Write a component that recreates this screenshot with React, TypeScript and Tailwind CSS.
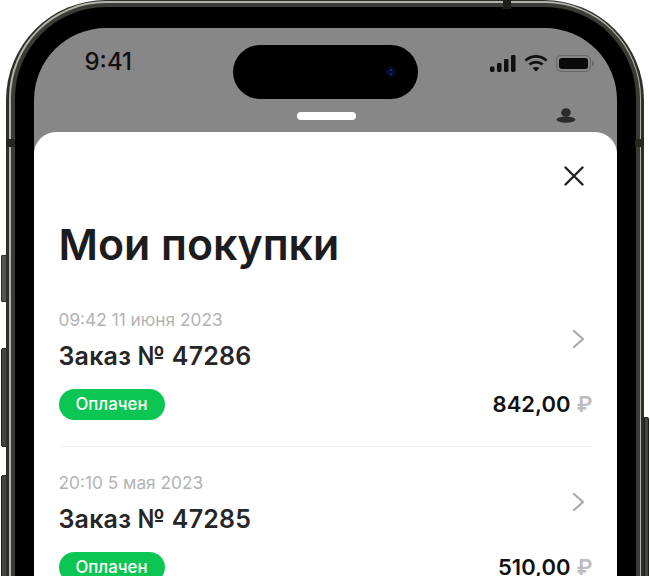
const orders = [
  { date: '09:42 11 июня 2023', title: 'Заказ № 47286', price: '842,00' },
  { date: '20:10 5 мая 2023', title: 'Заказ № 47285', price: '510,00' },
];

function StatusIcons() {
  return (
    <div className="flex items-center gap-[8px] pt-[1px]">
      <svg width="26" height="17" viewBox="0 0 26 17" fill="#111">
        <rect x="0" y="11.5" width="4.5" height="5.5" rx="1.4" />
        <rect x="7" y="8" width="4.5" height="9" rx="1.4" />
        <rect x="14" y="4" width="4.5" height="13" rx="1.4" />
        <rect x="21" y="0" width="4.5" height="17" rx="1.4" />
      </svg>
      <svg width="24" height="17" viewBox="0 0 24 17" fill="none" stroke="#111" strokeWidth="2.7">
        <path d="M1.4 5.6 C7.5 -0.1 16.5 -0.1 22.6 5.6" />
        <path d="M5.4 9.6 C9.2 6.2 14.8 6.2 18.6 9.6" />
        <path d="M12 16.6 L8.5 13 C10.5 11.5 13.5 11.5 15.5 13 Z" fill="#111" stroke="none" />
      </svg>
      <div className="flex items-center">
        <div className="w-[35px] h-[17px] rounded-[5px] border border-[#666] p-[2px]">
          <div className="w-full h-full rounded-[3px] bg-[#0a0a0a]" />
        </div>
        <div className="w-[1.5px] h-[5px] ml-[1px] rounded-r-full bg-[#666]" />
      </div>
    </div>
  );
}

function OrderRow({ date, title, price, last }: { date: string; title: string; price: string; last?: boolean }) {
  return (
    <div className={`flex flex-col pb-[26px] mb-[26px] ${last ? '' : 'border-b border-[#f1f1f1]'}`}>
      <div className="flex items-start justify-between">
        <div className="flex flex-col">
          <span className="text-[17.3px] leading-[20px] text-[#b3b3b3]">{date}</span>
          <span className="mt-[11px] text-[25px] leading-[30px] font-semibold text-[#262626] tracking-[0.2px]">{title}</span>
        </div>
        <svg className="mt-[19px] mr-[8px]" width="13" height="20" viewBox="0 0 13 20" fill="none" stroke="#a9a9a9" strokeWidth="2.2" strokeLinecap="round" strokeLinejoin="round">
          <path d="M2 2l9 8-9 8" />
        </svg>
      </div>
      <div className="mt-[18px] flex items-center justify-between">
        <span className="h-[31px] w-[106px] pt-[1px] rounded-full bg-[#0bc653] flex items-center justify-center text-[16.8px] font-medium text-white">
          Оплачен
        </span>
        <span className="text-[22px] leading-[30px] font-semibold text-[#111] flex items-center gap-[6px]">
          {price}
          <span className="text-[#bdbdbd]">₽</span>
        </span>
      </div>
    </div>
  );
}

export default function App() {
  return (
    <div className="relative w-[650px] h-[576px] overflow-hidden bg-white font-['Inter',sans-serif]">
      {/* Side buttons */}
      <div className="absolute left-[1px] top-[255px] w-[6px] h-[47px] rounded-l-[1px] bg-[#55554e] border border-[#2c2c28]" />
      <div className="absolute left-[1px] top-[348px] w-[6px] h-[99px] rounded-l-[2px] bg-[#45453f] border border-[#1c1c1a]" />
      <div className="absolute left-[1px] top-[475px] w-[6px] h-[120px] rounded-l-[2px] bg-[#45453f] border border-[#1c1c1a]" />
      <div className="absolute left-[644px] top-[417px] w-[5px] h-[180px] rounded-r-[2px] bg-[#45453f] border border-[#1c1c1a]" />

      {/* Phone body */}
      <div className="relative mx-[6px] h-[800px] rounded-t-[100px] bg-[#2f2f2a] px-[3px] pt-[1px]">
        <div className="h-full rounded-t-[97px] bg-[#b4b4ac] px-[1.5px] pt-[1.5px]">
          <div className="h-full rounded-t-[95px] bg-[#3c3c36] px-[4px] pt-[4px]">
            <div className="h-full rounded-t-[91px] bg-black px-[19px] pt-[21px]">
              {/* Screen */}
              <div className="relative h-full rounded-t-[72px] bg-[#878787] flex flex-col">
                <div className="flex items-start h-[104px] pl-[51px] pr-[23px]">
                  <span className="mt-[20px] w-[148px] text-[24px] leading-[28px] font-medium text-[#111]">9:41</span>
                  <div className="relative mt-[17px] w-[185px] h-[54px] rounded-full bg-black">
                    <div className="absolute left-[153px] top-[22px] w-[10px] h-[10px] rounded-full bg-[#0a0a2c]">
                      <div className="mx-auto mt-[2px] w-[2px] h-[2px] rounded-full bg-[#2a2aa0]" />
                      <div className="mx-auto mt-[2px] w-[2px] h-[2px] rounded-full bg-[#2a2aa0]" />
                    </div>
                  </div>
                  <div className="ml-auto mt-[26px]">
                    <StatusIcons />
                  </div>
                </div>

                <div className="absolute left-[263px] top-[84px] w-[59px] h-[8px] rounded-full bg-white" />
                <svg className="absolute left-[522px] top-[80px]" width="20" height="15" viewBox="0 0 20 15" fill="#2a2a2a">
                  <ellipse cx="10" cy="4.5" rx="4.8" ry="4.3" />
                  <ellipse cx="10" cy="11.6" rx="9.5" ry="3.1" />
                </svg>

                {/* Sheet */}
                <div className="flex-1 rounded-t-[22px] bg-white pl-[25px] pr-[24px]">
                  <div className="flex justify-end pt-[34px] pr-[9px]">
                    <svg width="20" height="20" viewBox="0 0 20 20" fill="none" stroke="#222" strokeWidth="2.4" strokeLinecap="round">
                      <path d="M1.5 1.5l17 17M18.5 1.5l-17 17" />
                    </svg>
                  </div>
                  <h1 className="mt-[34px] text-[42.8px] leading-[50px] font-semibold text-[#1c1c1e]">Мои покупки</h1>
                  <div className="mt-[40px] flex flex-col">
                    {orders.map((o, i) => (
                      <OrderRow key={o.title} {...o} last={i === orders.length - 1} />
                    ))}
                  </div>
                </div>
              </div>
            </div>
          </div>
        </div>

        {/* Antenna bands */}
        <div className="absolute left-0 top-[139px] w-[9px] h-[8px] bg-[#26261f]" />
        <div className="absolute right-0 top-[139px] w-[9px] h-[8px] bg-[#26261f]" />
        <div className="absolute left-[497px] top-0 w-[8px] h-[9px] bg-[#1d1d1a]" />
      </div>
    </div>
  );
}
